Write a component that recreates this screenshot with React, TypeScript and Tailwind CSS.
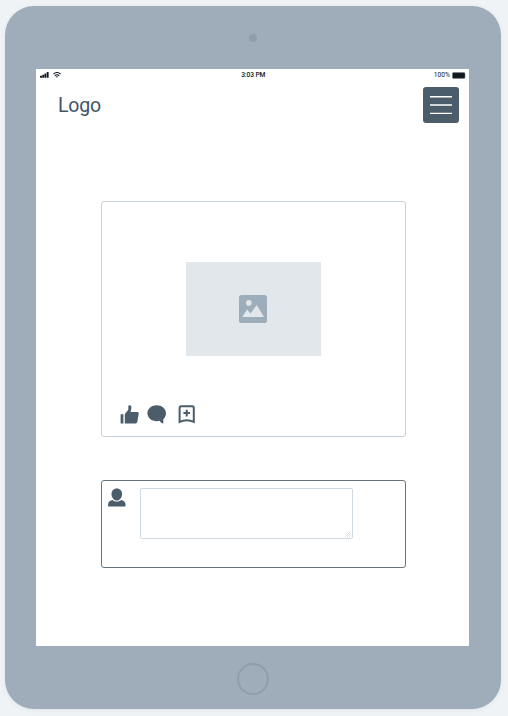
import React from "react";

function StatusBar() {
  return (
    <div className="flex h-[12px] items-center justify-between pl-[3.5px] pr-[2px] text-[6.7px] leading-none text-[#101820]">
      <div className="flex w-[60px] items-center gap-[4px]">
        <svg width="9" height="6" viewBox="0 0 9 6" fill="currentColor">
          <rect x="0" y="3.8" width="1.9" height="2" rx=".3" />
          <rect x="2.2" y="2.8" width="1.9" height="3" rx=".3" />
          <rect x="4.4" y="1.4" width="1.9" height="4.4" rx=".3" />
          <rect x="6.7" y="0" width="1.9" height="5.8" rx=".3" />
        </svg>
        <svg width="8" height="6" viewBox="0 0 8 6" fill="none" stroke="currentColor" strokeWidth="1.1">
          <path d="M.4 2.1Q4-1 7.6 2.1M1.8 3.7Q4 1.9 6.2 3.7" />
          <path d="M2.9 4.6Q4 3.9 5.1 4.6L4 5.8Z" fill="currentColor" stroke="none" />
        </svg>
      </div>
      <span className="font-medium tracking-[-0.1px]">3:03 PM</span>
      <div className="flex w-[60px] items-center justify-end gap-[2px]">
        <span>100%</span>
        <svg width="15" height="7" viewBox="0 0 15 7">
          <rect x=".4" y=".6" width="12.6" height="5.8" rx="1" fill="#101820" stroke="#7b858c" strokeWidth=".5" />
          <path d="M13.8 2.4Q14.8 3.5 13.8 4.6Z" fill="#7b858c" />
        </svg>
      </div>
    </div>
  );
}

function Header() {
  return (
    <header className="flex h-[42px] items-start justify-between pl-[22px] pr-[10px] pt-[6px]">
      <span className="pt-[7px] text-[19.5px] leading-[24px] tracking-[-0.2px] text-[#425466]">Logo</span>
      <button className="flex h-[36px] w-[36px] flex-col items-center justify-center rounded-[3px] bg-[#4b5d6b]">
        <svg width="22" height="20" viewBox="0 0 22 20" stroke="#fff" strokeWidth="1.4">
          <path d="M0 1.8H22M0 10H22M0 18.4H22" />
        </svg>
      </button>
    </header>
  );
}

function PostCard() {
  return (
    <section className="ml-[65px] mt-[78px] flex h-[236px] w-[305px] flex-col rounded-[3px] border border-[#c9d2da]">
      <div className="ml-[84px] mt-[60px] flex h-[94px] w-[135px] items-center justify-center bg-[#e2e7eb]">
        <svg className="mr-[1px]" width="28" height="28" viewBox="0 0 28 28">
          <rect width="28" height="28" rx="2.6" fill="#9eadba" />
          <circle cx="9.8" cy="7.9" r="2.8" fill="#e2e7eb" />
          <path d="M3.3 22 8 14.4 11.5 18.6 17.7 10 25 22Z" fill="#e2e7eb" />
        </svg>
      </div>
      <div className="ml-[18px] mt-[49px] flex h-[20px] text-[#4b5d6b]">
        <svg width="19" height="20" viewBox="0 0 19 20" fill="currentColor">
          <path d="M.6 9.3H3.4V18.5H.6ZM4.8 9 8.3 4.8V1.5C8.3.6 9.1.2 9.9.3 11 .5 11.5 1.4 11.4 2.8L10.6 7H17.2C18.2 7 18.9 7.8 18.7 8.8L17.3 16.8C17.1 18 16.4 18.5 15.4 18.5H4.8Z" />
        </svg>
        <svg className="ml-[8px]" width="20" height="20" viewBox="0 0 20 20" fill="currentColor">
          <path d="M9.7.3C4.7.3.4 3.8.4 8.2S4.7 16.2 9.7 16.2C11 16.2 12 16 12.8 15.7 13.6 17.4 14.9 18.4 16.3 18.5V14.2C17.9 12.7 19 10.6 19 8.2 19 3.8 14.7.3 9.7.3Z" />
        </svg>
        <svg className="ml-[11px]" width="18" height="20" viewBox="0 0 18 20" fill="none" stroke="currentColor" strokeWidth="2">
          <path d="M1.6 16.9V2.9Q1.6 1.3 3.2 1.3H14.2Q15.8 1.3 15.8 2.9V16.9Q8.7 13.6 1.6 16.9Z" />
          <path d="M8.7 4.8V11.4M5.4 8.1H12" />
        </svg>
      </div>
    </section>
  );
}

function CommentBox() {
  return (
    <section className="ml-[65px] mt-[43px] flex h-[88px] w-[305px] rounded-[3px] border border-[#657581]">
      <svg className="ml-[6px] mt-[7px] text-[#4b5d6b]" width="18" height="19" viewBox="0 0 18 19" fill="currentColor">
        <path d="M8.8.5C12 .5 14.1 2.9 14.1 6S11.9 12.6 8.8 12.6 3.5 9.1 3.5 6 5.6.5 8.8.5Z" />
        <path d="M.1 18.4V16.3C.1 13.8 2.4 12.4 4.5 12.1 7 14.2 10.6 14.2 13.1 12.1 15.2 12.4 17.5 13.8 17.5 16.3V18.4Z" />
      </svg>
      <div className="ml-[14px] mt-[7px] flex h-[51px] w-[212.5px] items-end justify-end rounded-[2px] border border-[#d0d9e0]">
        <svg className="mb-px mr-px" width="6" height="6" viewBox="0 0 6 6" stroke="#dbe1e6" strokeWidth=".9">
          <path d="M0 6 6 0M2 6 6 2M4 6 6 4" />
        </svg>
      </div>
    </section>
  );
}

export default function App() {
  return (
    <div className="h-[716px] w-[508px] overflow-hidden bg-[#eff3f6] pl-[5px] pt-[5.5px] font-['Roboto',sans-serif]">
      <div className="flex h-[703.5px] w-[495.5px] flex-col rounded-[29px] bg-[#9eadb9] pl-[31px] shadow-[0_1px_4px_rgba(100,120,135,0.1)]">
        <div className="flex h-[63.5px] w-[433px] items-center justify-center pt-[2px]">
          <span className="h-[8px] w-[8px] rounded-full bg-[#8f9eab]" />
        </div>
        <main className="h-[576.5px] w-[433px] bg-white">
          <StatusBar />
          <Header />
          <PostCard />
          <CommentBox />
        </main>
        <div className="flex h-[63px] w-[433px] items-center justify-center pt-[3px]">
          <span className="h-[32px] w-[32px] rounded-full border-2 border-[#8f9eab]" />
        </div>
      </div>
    </div>
  );
}
